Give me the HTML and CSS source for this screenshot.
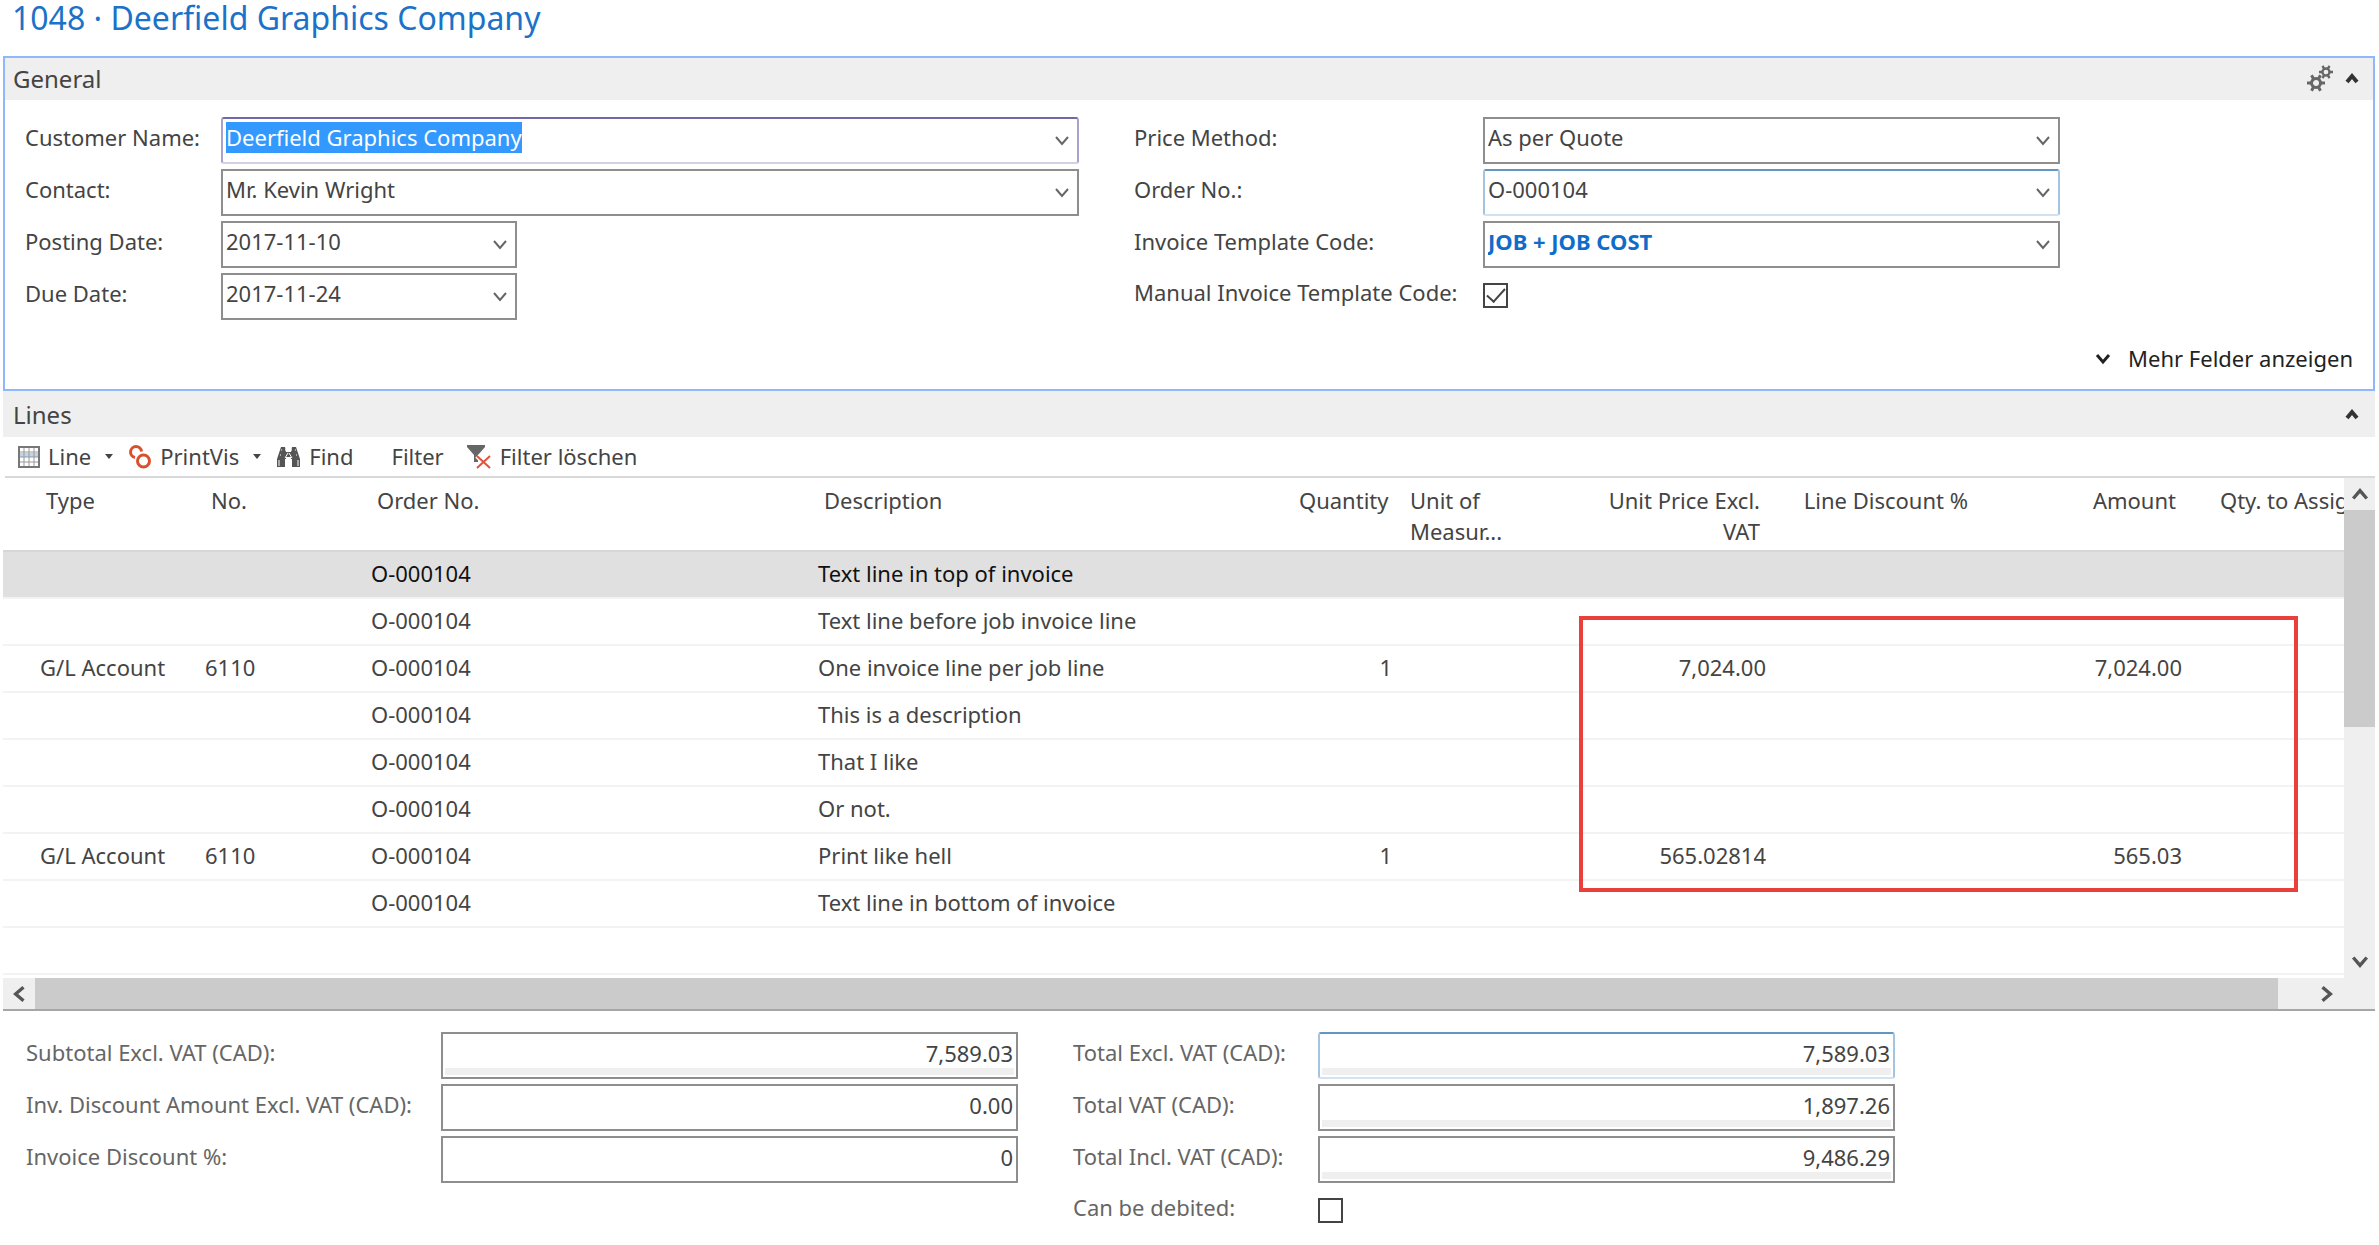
FILE: index.html
```html
<!DOCTYPE html>
<html lang="en">
<head>
  <meta charset="utf-8">
  <title>1048 · Deerfield Graphics Company</title>
  <link rel="stylesheet" href="styles.css">
</head>
<body>
  <svg class="defs" width="0" height="0" aria-hidden="true">
    <symbol id="chevron" viewBox="0 0 16 16"><path d="M2 4l6 7 6-7" fill="none" stroke="currentColor" stroke-width="2"/></symbol>
    <symbol id="caret-up" viewBox="0 0 16 16"><path d="M3 12l5-6 5 6" fill="none" stroke="currentColor" stroke-width="4"/></symbol>
    <symbol id="caret-down" viewBox="0 0 16 16"><path d="M2 4l6 7 6-7" fill="none" stroke="currentColor" stroke-width="3"/></symbol>
    <symbol id="drop" viewBox="0 0 10 6"><path d="M0 0h10L5 6z" fill="currentColor"/></symbol>
    <symbol id="gear" viewBox="0 0 18 18">
      <circle cx="9" cy="9" r="4.5" fill="none" stroke="currentColor" stroke-width="3"/>
      <path d="M0 9h4M14 9h4M4.500 1.200l2 3.500M11.500 13.300l2 3.500M4.500 16.800l2-3.500M11.500 4.700l2-3.500" stroke="currentColor" stroke-width="3"/>
    </symbol>
  </svg>

  <h1 class="page-title">1048 · Deerfield Graphics Company</h1>

  <section class="panel panel-active">
    <header class="panel-head">
      <h2>General</h2>
      <span class="head-tools">
        <button class="icon-btn" type="button" aria-label="Customize">
          <svg width="26" height="27" viewBox="0 0 26 27">
            <use href="#gear" x="0" y="9" width="18" height="18"/>
            <use href="#gear" x="12" y="0" width="14" height="14"/>
          </svg>
        </button>
        <button class="icon-btn dark" type="button" aria-label="Collapse General"><svg width="16" height="16"><use href="#caret-up"/></svg></button>
      </span>
    </header>
    <form class="fields general">
      <div class="column">
        <div class="field">
          <label for="customer">Customer Name:</label>
          <span class="combo focused">
            <input id="customer" type="text" value="Deerfield Graphics Company">
            <button type="button" aria-label="Choose customer"><svg width="16" height="16"><use href="#chevron"/></svg></button>
          </span>
        </div>
        <div class="field">
          <label for="contact">Contact:</label>
          <span class="combo">
            <select id="contact"><option>Mr. Kevin Wright</option></select>
            <svg width="16" height="16"><use href="#chevron"/></svg>
          </span>
        </div>
        <div class="field">
          <label for="posting">Posting Date:</label>
          <span class="combo short">
            <input id="posting" type="text" value="2017-11-10">
            <button type="button" aria-label="Choose posting date"><svg width="16" height="16"><use href="#chevron"/></svg></button>
          </span>
        </div>
        <div class="field">
          <label for="due">Due Date:</label>
          <span class="combo short">
            <input id="due" type="text" value="2017-11-24">
            <button type="button" aria-label="Choose due date"><svg width="16" height="16"><use href="#chevron"/></svg></button>
          </span>
        </div>
      </div>
      <div class="column">
        <div class="field">
          <label for="method">Price Method:</label>
          <span class="combo">
            <select id="method"><option>As per Quote</option></select>
            <svg width="16" height="16"><use href="#chevron"/></svg>
          </span>
        </div>
        <div class="field">
          <label for="order">Order No.:</label>
          <span class="combo hot">
            <select id="order"><option>O-000104</option></select>
            <svg width="16" height="16"><use href="#chevron"/></svg>
          </span>
        </div>
        <div class="field">
          <label for="template">Invoice Template Code:</label>
          <span class="combo">
            <select id="template" class="strong"><option>JOB + JOB COST</option></select>
            <svg width="16" height="16"><use href="#chevron"/></svg>
          </span>
        </div>
        <div class="field field-check">
          <label for="manual">Manual Invoice Template Code:</label>
          <input id="manual" class="check" type="checkbox" checked>
        </div>
      </div>
    </form>
    <footer class="panel-foot">
      <button class="more" type="button"><svg width="16" height="16"><use href="#caret-down"/></svg>Mehr Felder anzeigen</button>
    </footer>
  </section>

  <section class="panel">
    <header class="panel-head lines-head">
      <h2>Lines</h2>
      <span class="head-tools">
        <button class="icon-btn dark" type="button" aria-label="Collapse Lines"><svg width="16" height="16"><use href="#caret-up"/></svg></button>
      </span>
    </header>

    <nav class="toolbar">
      <button type="button">
        <svg width="22" height="22" viewBox="0 0 22 22">
          <path d="M1 1h20v20H1z" fill="#fff" stroke="#777" stroke-width="2"/>
          <path d="M2 7h18v4H2z" fill="#bcd6ee"/>
          <path d="M6 2v18M11 2v18M16 2v18M2 6h18M2 11h18M2 16h18" stroke="#999"/>
        </svg>
        Line <svg class="drop" width="8" height="5"><use href="#drop"/></svg>
      </button>
      <button type="button">
        <svg width="24" height="24" viewBox="0 0 24 24" fill="none" stroke="#d9512c" stroke-width="3">
          <path d="M13.500 6.500A5.500 5.500 0 1 0 7 12.500"/>
          <circle cx="15.500" cy="16" r="6"/>
        </svg>
        PrintVis <svg class="drop" width="8" height="5"><use href="#drop"/></svg>
      </button>
      <button type="button">
        <!-- binoculars -->
        <svg width="25" height="22" viewBox="0 0 25 22">
          <path d="M5 1h4l1 5h5l1-5h4l2 6 2 6v8h-8v-8h-1v-2h-5v2H9v8H1v-8l2-6z" fill="#555"/>
          <path d="M3 14v6M22 14v6M5 4h1M9 4h1M15 4h1M19 4h1M4 9h1M20 9h1M12 7l-3 5M13 7l3 5" stroke="#fff" fill="none"/>
        </svg>
        Find
      </button>
      <button class="plain" type="button">Filter</button>
      <button type="button">
        <svg width="25" height="25" viewBox="0 0 25 25">
          <path d="M0 1h18v2l-7 8v7H7v-7L0 3z" fill="#666"/>
          <path d="M10 12l13 12M23 12L10 24" stroke="#fff" stroke-width="5"/>
          <path d="M10 12l13 12M23 12L10 24" stroke="#e0533a" stroke-width="2"/>
        </svg>
        Filter löschen
      </button>
    </nav>

    <div class="grid">
      <div class="grid-view">
        <table>
          <colgroup>
            <col class="c-mark"><col class="c-type"><col class="c-no"><col class="c-order"><col class="c-desc"><col class="c-qty">
            <col class="c-unit"><col class="c-price"><col class="c-disc"><col class="c-amount"><col>
          </colgroup>
          <thead>
            <tr>
              <th></th><th>Type</th><th>No.</th><th>Order No.</th><th>Description</th><th class="num">Quantity</th>
              <th>Unit of<br>Measur...</th><th class="num">Unit Price Excl.<br>VAT</th><th class="num">Line Discount %</th><th class="num">Amount</th><th class="cut">Qty. to Assig</th>
            </tr>
          </thead>
          <tbody>
            <tr class="selected"><td></td><td></td><td></td><td>O-000104</td><td>Text line in top of invoice</td><td></td><td></td><td></td><td></td><td></td><td></td></tr>
            <tr><td></td><td></td><td></td><td>O-000104</td><td>Text line before job invoice line</td><td></td><td></td><td></td><td></td><td></td><td></td></tr>
            <tr><td></td><td>G/L Account</td><td>6110</td><td>O-000104</td><td>One invoice line per job line</td><td class="num">1</td><td></td><td class="num">7,024.00</td><td></td><td class="num">7,024.00</td><td></td></tr>
            <tr><td></td><td></td><td></td><td>O-000104</td><td>This is a description</td><td></td><td></td><td></td><td></td><td></td><td></td></tr>
            <tr><td></td><td></td><td></td><td>O-000104</td><td>That I like</td><td></td><td></td><td></td><td></td><td></td><td></td></tr>
            <tr><td></td><td></td><td></td><td>O-000104</td><td>Or not.</td><td></td><td></td><td></td><td></td><td></td><td></td></tr>
            <tr><td></td><td>G/L Account</td><td>6110</td><td>O-000104</td><td>Print like hell</td><td class="num">1</td><td></td><td class="num">565.02814</td><td></td><td class="num">565.03</td><td></td></tr>
            <tr><td></td><td></td><td></td><td>O-000104</td><td>Text line in bottom of invoice</td><td></td><td></td><td></td><td></td><td></td><td></td></tr>
            <tr><td></td><td></td><td></td><td></td><td></td><td></td><td></td><td></td><td></td><td></td><td></td></tr>
          </tbody>
        </table>
        <div class="callout"></div>
      </div>
      <div class="vbar">
        <button type="button" aria-label="Scroll up"><svg class="up" width="18" height="18"><use href="#caret-down"/></svg></button>
        <span class="thumb"></span>
        <button type="button" aria-label="Scroll down"><svg width="18" height="18"><use href="#caret-down"/></svg></button>
      </div>
      <div class="hbar">
        <button type="button" aria-label="Scroll left"><svg class="left" width="18" height="18"><use href="#caret-down"/></svg></button>
        <span class="thumb"></span>
        <button type="button" aria-label="Scroll right"><svg class="right" width="18" height="18"><use href="#caret-down"/></svg></button>
      </div>
    </div>

    <form class="fields totals">
      <div class="column">
        <div class="field"><label for="subtotal">Subtotal Excl. VAT (CAD):</label><input id="subtotal" class="amount" type="text" value="7,589.03" readonly></div>
        <div class="field"><label for="inv-discount">Inv. Discount Amount Excl. VAT (CAD):</label><input id="inv-discount" class="amount" type="text" value="0.00"></div>
        <div class="field"><label for="discount">Invoice Discount %:</label><input id="discount" class="amount" type="text" value="0"></div>
      </div>
      <div class="column">
        <div class="field"><label for="total-excl">Total Excl. VAT (CAD):</label><input id="total-excl" class="amount hot" type="text" value="7,589.03" readonly></div>
        <div class="field"><label for="total-vat">Total VAT (CAD):</label><input id="total-vat" class="amount" type="text" value="1,897.26" readonly></div>
        <div class="field"><label for="total-incl">Total Incl. VAT (CAD):</label><input id="total-incl" class="amount" type="text" value="9,486.29" readonly></div>
        <div class="field field-check"><label for="debited">Can be debited:</label><input id="debited" class="check" type="checkbox"></div>
      </div>
    </form>
  </section>

  <script src="main.js"></script>
</body>
</html>
```
FILE: styles.css
```css
:root {
  --text: #444;
  --border: #8e8e8e;
  --bar: #efefef;
  --accent: #0f6cc8;
}

* {
  box-sizing: border-box;
}

body {
  margin: 0;
  padding: 0 4px 0 3px;
  font: 22px/31px "Noto Sans", "Open Sans", sans-serif;
  color: var(--text);
  background: #fff;
}

button, input, select {
  font: inherit;
  color: inherit;
  margin: 0;
  padding: 0;
  border: 0;
  background: none;
  border-radius: 0;
}

svg {
  display: block;
  flex: none;
}

.defs {
  position: absolute;
}

.page-title {
  margin: 0;
  padding: 0 9px 20px;
  font-size: 32px;
  line-height: 36px;
  font-weight: 400;
  color: #1b72c8;
}

/* panels */
.panel-active {
  border: 2px solid #8fb8f8;
}

.panel-head {
  display: flex;
  justify-content: space-between;
  align-items: center;
  height: 42px;
  padding: 0 13px 2px 8px;
  background: var(--bar);
}

.panel-head h2 {
  margin: 0;
  font-size: 24px;
  font-weight: 400;
}

.lines-head {
  height: 46px;
  padding: 0 15px 0 10px;
}

.head-tools {
  display: flex;
  align-items: center;
  gap: 11px;
}

.icon-btn {
  color: #666;
}

.dark {
  color: #333;
}

/* form fields */
.fields {
  display: flex;
}

.general {
  padding: 17px 0 0 20px;
  gap: 55px;
}

.column {
  display: flex;
  flex-direction: column;
  gap: 5px;
}

.field {
  display: flex;
  height: 47px;
}

.field label {
  flex: none;
  padding-top: 5px;
}

.field-check label {
  padding-top: 4px;
}

.general .column {
  width: 926px;
}

.general .column:first-child {
  width: 1054px;
}

.general .column:first-child label {
  width: 196px;
}

.general .column:last-child label {
  width: 349px;
}

.combo {
  flex: 1;
  display: grid;
  grid-template-columns: 1fr 23px;
  border: 2px solid var(--border);
}

.combo.short {
  flex: none;
  width: 296px;
}

.combo input, .combo select {
  grid-area: 1 / 1;
  min-width: 0;
  height: 31px;
  margin-top: 3px;
  padding-left: 3px;
  line-height: 31px;
  outline: 0;
  appearance: none;
}

.combo select {
  grid-column: 1 / -1;
}

.combo > svg, .combo button {
  grid-area: 1 / 2;
  align-self: center;
  color: #666;
  pointer-events: none;
}

.focused {
  border-color: #7467a8 #a9a2cc #d3cfe6;
  border-radius: 3px;
}

.hot {
  border-color: #6396c3 #a3c5e2 #d2e2f0;
  border-radius: 3px;
}

.combo ::selection {
  color: #fff;
  background: #3399ff;
}

.strong {
  font-weight: 700;
  color: var(--accent);
}

.check {
  appearance: none;
  display: grid;
  place-items: center;
  width: 25px;
  height: 25px;
  margin-top: 10px;
  border: 2px solid #444;
}

.check:checked::after {
  content: "";
  width: 16px;
  height: 8px;
  margin-bottom: 6px;
  border: solid #444;
  border-width: 0 0 2px 2px;
  transform: rotate(-48deg);
}

.panel-foot {
  display: flex;
  justify-content: flex-end;
  padding: 23px 20px 15px;
}

.more {
  display: flex;
  align-items: center;
  gap: 17px;
  color: #222;
}

/* toolbar */
.toolbar {
  display: flex;
  align-items: center;
  height: 41px;
  margin-left: 2px;
  padding-left: 13px;
  gap: 15px;
  border-bottom: 2px solid #d9d9d9;
}

.toolbar button {
  display: flex;
  align-items: center;
  gap: 8px;
}

.toolbar .drop {
  margin-left: 6px;
}

.toolbar .plain {
  margin: 0 8px 0 23px;
}

/* lines grid */
.grid {
  display: grid;
  grid-template-columns: minmax(0, 1fr) 31px;
  border-bottom: 2px solid #a6a6a6;
}

.grid-view {
  position: relative;
  overflow: hidden;
  padding-bottom: 3px;
}

table {
  width: 100%;
  table-layout: fixed;
  border-collapse: collapse;
}

.c-mark { width: 31px; }
.c-type { width: 165px; }
.c-no { width: 166px; }
.c-order { width: 447px; }
.c-desc { width: 475px; }
.c-qty { width: 111px; }
.c-unit { width: 174px; }
.c-price { width: 200px; }
.c-disc { width: 208px; }
.c-amount { width: 208px; }

th {
  height: 72px;
  padding: 7px 12px 3px;
  font-weight: 400;
  text-align: left;
  vertical-align: top;
  white-space: nowrap;
}

td {
  height: 47px;
  padding: 0 6px 2px;
  border-bottom: 2px solid #f3f3f3;
  white-space: nowrap;
}

.num {
  text-align: right;
}

.cut {
  padding: 7px 0 3px 32px;
}

.selected {
  color: #111;
  background: #e0e0e0;
}

.selected td {
  border-top: 2px solid #d6d6d6;
}

/* marks the job prices */
.callout {
  position: absolute;
  left: 1576px;
  top: 138px;
  width: 719px;
  height: 276px;
  border: 4px solid #ea403b;
}

/* scrollbars */
.vbar, .hbar {
  display: flex;
  justify-content: space-between;
  background: var(--bar);
  color: #555;
}

.vbar {
  flex-direction: column;
}

.vbar button, .hbar button {
  display: grid;
  place-items: center;
  flex: none;
  width: 32px;
  height: 32px;
}

.thumb {
  background: #cbcbcb;
}

.vbar .thumb {
  height: 217px;
  margin-bottom: auto;
}

.hbar {
  grid-column: 1 / -1;
  height: 31px;
  padding-right: 32px;
}

.hbar .thumb {
  flex: 1;
  margin-right: 33px;
}

.up { transform: rotate(180deg); }
.left { transform: rotate(90deg); }
.right { transform: rotate(-90deg); }

/* totals */
.totals {
  padding: 21px 23px;
  gap: 55px;
}

.totals label {
  width: 415px;
  color: #666;
}

.totals .column:last-child label {
  width: 245px;
}

.amount {
  width: 577px;
  padding: 0 3px 5px;
  border: 2px solid var(--border);
  text-align: right;
}

.amount.hot {
  border-color: #6396c3 #a3c5e2 #d2e2f0;
}

.amount:read-only {
  background: linear-gradient(var(--bar), var(--bar)) center bottom 2px / calc(100% - 4px) 7px no-repeat;
}
```
FILE: main.js
```js
var customer = document.getElementById('customer');
customer.focus();
customer.select();
```
